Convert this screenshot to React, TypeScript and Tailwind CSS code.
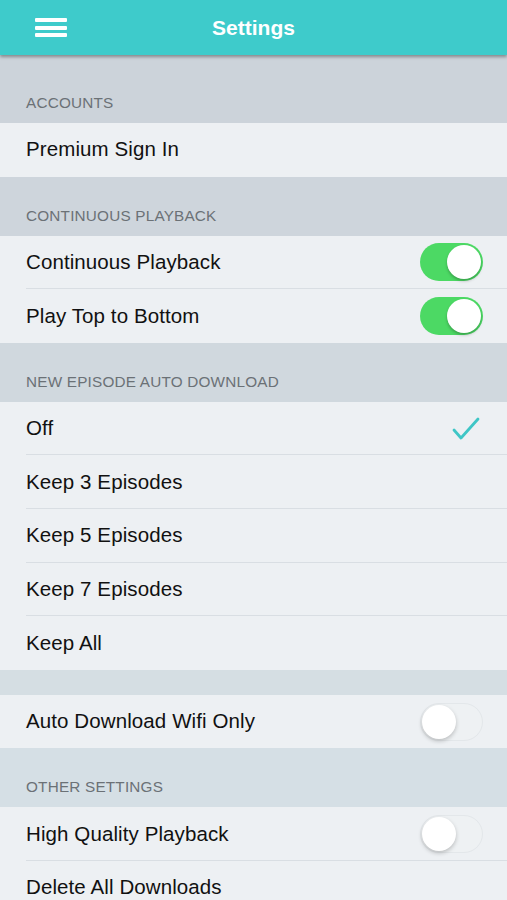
import React from 'react';

type RowProps = {
  label: string;
  last?: boolean;
  children?: React.ReactNode;
};

const Row = ({ label, last, children }: RowProps) => (
  <div className="relative flex items-center justify-between h-[53.6px] pl-[26px] pr-[24px] bg-[#edf0f3]">
    <span className="text-[20.5px] text-[#111] tracking-[0.1px]">{label}</span>
    {children}
    {!last && <div className="absolute bottom-0 left-[26px] right-0 h-px bg-[#d9dee3]" />}
  </div>
);

const SectionHeader = ({ title, tall, bg }: { title: string; tall?: boolean; bg: string }) => (
  <div className={`flex items-end px-[26px] pb-[8px] ${tall ? 'h-[68px]' : 'h-[59px]'} ${bg}`}>
    <span className="text-[15.3px] uppercase text-[#6b7176] tracking-[0.2px]">{title}</span>
  </div>
);

const Toggle = ({ on }: { on: boolean }) =>
  on ? (
    <div className="flex items-center justify-end w-[63px] h-[38px] rounded-full bg-[#4cd964] p-[2px]">
      <div className="w-[34px] h-[34px] rounded-full bg-white shadow-[0_2px_3px_rgba(0,0,0,0.25)]" />
    </div>
  ) : (
    <div className="flex items-center justify-start w-[63px] h-[38px] rounded-full bg-[#eef1f3] border border-[#e3e7ea] p-[1px]">
      <div className="w-[34px] h-[34px] rounded-full bg-white shadow-[0_2px_4px_rgba(0,0,0,0.22)]" />
    </div>
  );

const Check = () => (
  <svg width="28" height="24" viewBox="0 0 28 24" className="mr-[3px]">
    <path d="M2 13 L9 21 L26 2" fill="none" stroke="#3fc6c6" strokeWidth="2.8" strokeLinecap="round" strokeLinejoin="round" />
  </svg>
);

const App = () => {
  return (
    <div className="w-[507px] h-[900px] overflow-hidden bg-[#edf0f3] font-['Liberation_Sans',Arial,sans-serif]">
      {/* Top bar */}
      <div className="relative z-10 flex items-center h-[55px] bg-[#3ecbcb] shadow-[0_2px_3px_rgba(0,0,0,0.35)]">
        <div className="flex flex-col gap-[3.5px] ml-[35px]">
          <div className="w-[32px] h-[4px] bg-white rounded-[1px]" />
          <div className="w-[32px] h-[4px] bg-white rounded-[1px]" />
          <div className="w-[32px] h-[4px] bg-white rounded-[1px]" />
        </div>
        <div className="absolute left-0 right-0 text-center text-white text-[21px] font-bold pointer-events-none">Settings</div>
      </div>

      <SectionHeader title="Accounts" tall bg="bg-[#ccd3da]" />
      <Row label="Premium Sign In" last />

      <SectionHeader title="Continuous Playback" bg="bg-[#ced5dc]" />
      <Row label="Continuous Playback">
        <Toggle on />
      </Row>
      <Row label="Play Top to Bottom" last>
        <Toggle on />
      </Row>

      <SectionHeader title="New Episode Auto Download" bg="bg-[#d0d8de]" />
      <Row label="Off">
        <Check />
      </Row>
      <Row label="Keep 3 Episodes" />
      <Row label="Keep 5 Episodes" />
      <Row label="Keep 7 Episodes" />
      <Row label="Keep All" last />

      <div className="h-[25px] bg-[#d5dee3]" />
      <Row label="Auto Download Wifi Only" last>
        <Toggle on={false} />
      </Row>

      <SectionHeader title="Other Settings" bg="bg-[#d5dfe5]" />
      <Row label="High Quality Playback">
        <Toggle on={false} />
      </Row>
      <Row label="Delete All Downloads" last />
    </div>
  );
};

export default App;
